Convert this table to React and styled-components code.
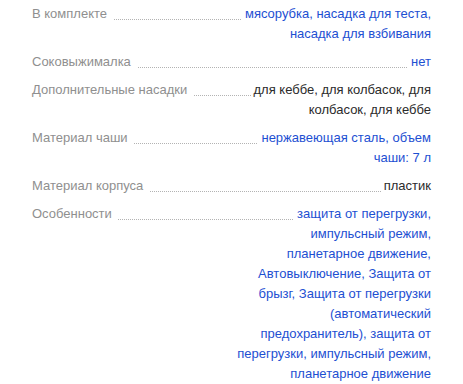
import React from "react";
import styled, { createGlobalStyle } from "styled-components";

const GlobalStyle = createGlobalStyle`
  html, body {
    margin: 0;
    padding: 0;
    background: #fff;
  }
  body {
    font-family: "Liberation Sans", Arial, sans-serif;
  }
`;

const specs = [
  { name: "В комплекте", value: "мясорубка, насадка для теста, насадка для взбивания", link: true },
  { name: "Соковыжималка", value: "нет", link: true },
  { name: "Дополнительные насадки", value: "для кеббе, для колбасок, для колбасок, для кеббе" },
  { name: "Материал чаши", value: "нержавеющая сталь, объем чаши: 7 л", link: true },
  { name: "Материал корпуса", value: "пластик" },
  {
    name: "Особенности",
    value:
      "защита от перегрузки, импульсный режим, планетарное движение, Автовыключение, Защита от брызг, Защита от перегрузки (автоматический предохранитель), защита от перегрузки, импульсный режим, планетарное движение",
    link: true,
  },
];

const List = styled.dl`
  margin: 0;
  padding: 4px 32px;
  font-size: 13px;
  line-height: 20px;
`;

const Row = styled.div`
  display: flex;
  justify-content: space-between;
  align-items: flex-start;
  margin-bottom: 8px;
  /* dotted leader, covered by the white label and value spans */
  background-image: linear-gradient(to right, #b3b3b3 1px, transparent 1px);
  background-size: 2px 1px;
  background-repeat: repeat-x;
  background-position: 0 15px;
`;

const Term = styled.dt`
  margin: 0;
  white-space: nowrap;
  color: #8f8f8f;

  span {
    background: #fff;
    padding-right: 6px;
  }
`;

const Desc = styled.dd`
  margin: 0;
  max-width: 50%;
  text-align: right;

  span {
    background: #fff;
    padding-left: 3px;
    color: ${({ $link }) => ($link ? "#1d4fd2" : "#2b2b2b")};
  }
`;

export default function App() {
  return (
    <>
      <GlobalStyle />
      <List>
        {specs.map((s) => (
          <Row key={s.name}>
            <Term>
              <span>{s.name}</span>
            </Term>
            <Desc $link={s.link}>
              <span>{s.value}</span>
            </Desc>
          </Row>
        ))}
      </List>
    </>
  );
}
